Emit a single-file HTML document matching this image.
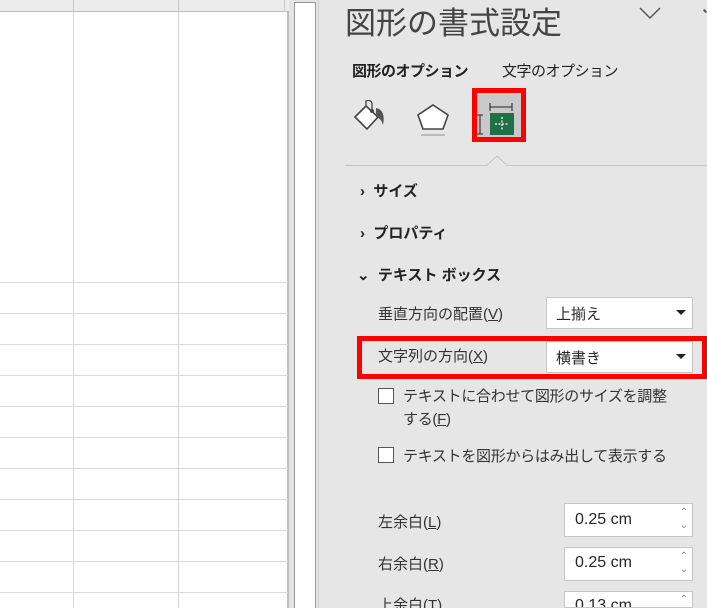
<!DOCTYPE html>
<html><head><meta charset="utf-8"><style>
*{margin:0;padding:0;box-sizing:border-box}
html{width:707px;height:608px;overflow:hidden}
body{width:707px;height:608px;overflow:hidden;background:#e6e6e6;position:relative;font-family:"Liberation Sans","Noto Sans CJK JP",sans-serif;color:#262626}
.a{position:absolute}
.grid{left:0;top:0;width:289px;height:608px;background:#fff}
.hl{position:absolute;left:0;width:288px;height:1px;background:#dadada}
.vl{position:absolute;top:12px;width:1px;height:596px;background:#d4d4d4}
.t{position:absolute;white-space:nowrap}
.dd{position:absolute;background:#fff;border:1px solid #c6c6c6;overflow:hidden}
.arr{position:absolute;right:6px;top:12px;width:0;height:0;border-left:5px solid transparent;border-right:5px solid transparent;border-top:5px solid #222}
.cb{position:absolute;width:16px;height:16px;background:#fff;border:1px solid #555}
u{text-decoration:underline}
</style></head><body>
<div class="a grid"></div>
<div class="a" style="left:0;top:0;width:289px;height:12px;background:#ececec;border-bottom:1px solid #bcbcbc"></div>
<div class="vl" style="left:73px"></div>
<div class="vl" style="left:178px"></div>
<div class="a" style="left:73px;top:0;width:1px;height:12px;background:#c8c8c8"></div>
<div class="a" style="left:178px;top:0;width:1px;height:12px;background:#c8c8c8"></div>
<div class="a" style="left:284px;top:0;width:1px;height:12px;background:#c8c8c8"></div>
<div class="a" style="left:287px;top:12px;width:2px;height:596px;background:#c0c0c0"></div>
<div class="hl" style="top:282px"></div><div class="hl" style="top:313px"></div><div class="hl" style="top:344px"></div><div class="hl" style="top:375px"></div><div class="hl" style="top:406px"></div><div class="hl" style="top:437px"></div><div class="hl" style="top:468px"></div><div class="hl" style="top:499px"></div><div class="hl" style="top:530px"></div><div class="hl" style="top:561px"></div><div class="hl" style="top:592px"></div>
<div class="a" style="left:289px;top:0;width:29px;height:608px;background:#e4e4e4"></div>
<div class="a" style="left:294px;top:2px;width:22px;height:606px;background:#fff;border:1px solid #999;border-bottom:none"></div>
<div class="a" style="left:318px;top:0;width:1px;height:608px;background:#d0d0d0"></div>
<div class="t" style="left:345px;top:-2px;font-size:31px;color:#444">図形の書式設定</div>
<svg class="a" style="left:639px;top:6px" width="24" height="14"><path d="M1 2 L11 12 L21 2" fill="none" stroke="#555" stroke-width="1.5"/></svg>
<div class="a" style="left:703px;top:10px;width:4px;height:2px;background:#555;transform:rotate(45deg)"></div>
<div class="t" style="left:352px;top:60px;font-size:15px;font-weight:bold;color:#222;letter-spacing:-0.5px">図形のオプション</div>
<div class="t" style="left:502px;top:60px;font-size:15px;color:#222;letter-spacing:-0.5px">文字のオプション</div>
<svg class="a" style="left:352px;top:100px" width="40" height="40"><path d="M3 17 L14 6 L26 17 L15 29 Z" fill="#fff" stroke="#444" stroke-width="1.6"/><path d="M14 6 L14 1 Q18 -1 20 3 L20 10" fill="none" stroke="#444" stroke-width="1.3"/><circle cx="20" cy="11" r="2" fill="#444"/><path d="M24 8 Q34 10 31 25 Q29 18 24 17 Z" fill="#555"/></svg>
<svg class="a" style="left:415px;top:102px" width="40" height="36"><path d="M18 3 L33 13 L28 27 L8 27 L3 13 Z" fill="#fff" stroke="#444" stroke-width="1.6"/><path d="M6 33 L30 33" stroke="#bbb" stroke-width="2"/></svg>
<div class="a" style="left:472px;top:88px;width:54px;height:54px;border:5px solid #ff0000;background:#c9c9c9"></div>
<svg class="a" style="left:477px;top:93px" width="44" height="44"><path d="M13 14 L35 14 M13 10 L13 18 M35 10 L35 18" stroke="#444" stroke-width="1.3" fill="none"/><path d="M3 22 L3 41 M0 22 L6 22 M0 41 L6 41" stroke="#444" stroke-width="1.3"/><rect x="13" y="20" width="24" height="22" fill="#1e7145"/><path d="M25 24 L25 38 M18 31 L32 31" stroke="#fff" stroke-width="1.3" stroke-dasharray="2 1.5"/></svg>
<div class="a" style="left:345px;top:165px;width:362px;height:1px;background:#c4c4c4"></div>
<svg class="a" style="left:486px;top:155px" width="22" height="12"><path d="M0 11 L11 1 L22 11" fill="#e6e6e6" stroke="#c4c4c4" stroke-width="1"/></svg>
<div class="t" style="left:360px;top:180px;font-size:15px;font-weight:bold;color:#222">›&nbsp; サイズ</div>
<div class="t" style="left:360px;top:222px;font-size:15px;font-weight:bold;color:#222">›&nbsp; プロパティ</div>
<div class="t" style="left:357px;top:264px;font-size:15px;font-weight:bold;color:#222">⌄&nbsp; テキスト ボックス</div>
<div class="t" style="left:378px;top:303px;font-size:15px;color:#333">垂直方向の配置(<u>V</u>)</div>
<div class="dd" style="left:546px;top:297px;width:147px;height:32px"><span class="t" style="left:9px;top:5px;font-size:15px">上揃え</span><div class="arr"></div></div>
<div class="a" style="left:357px;top:336px;width:350px;height:43px;border:5px solid #ff0000"></div>
<div class="t" style="left:378px;top:345px;font-size:15px;color:#333">文字列の方向(<u>X</u>)</div>
<div class="dd" style="left:546px;top:341px;width:147px;height:32px"><span class="t" style="left:9px;top:5px;font-size:15px">横書き</span><div class="arr"></div></div>
<div class="cb" style="left:378px;top:388px"></div>
<div class="t" style="left:403px;top:385px;font-size:15px;color:#333;line-height:23px;letter-spacing:-0.3px">テキストに合わせて図形のサイズを調整<br>する(<u>F</u>)</div>
<div class="cb" style="left:378px;top:447px"></div>
<div class="t" style="left:403px;top:445px;font-size:15px;color:#333;letter-spacing:-0.3px">テキストを図形からはみ出して表示する</div>
<div class="t" style="left:378px;top:511px;font-size:15px;color:#333">左余白(<u>L</u>)</div>
<div class="dd" style="left:564px;top:503px;width:129px;height:34px"><span class="t" style="left:10px;top:7px;font-size:16px">0.25 cm</span><span class="t" style="right:4px;top:2px;font-size:10px;color:#888;line-height:13px">⌃<br>⌄</span></div>
<div class="t" style="left:378px;top:553px;font-size:15px;color:#333">右余白(<u>R</u>)</div>
<div class="dd" style="left:564px;top:547px;width:129px;height:34px"><span class="t" style="left:10px;top:6px;font-size:16px">0.25 cm</span><span class="t" style="right:4px;top:2px;font-size:10px;color:#888;line-height:13px">⌃<br>⌄</span></div>
<div class="t" style="left:378px;top:594px;font-size:15px;color:#333">上余白(<u>T</u>)</div>
<div class="dd" style="left:564px;top:591px;width:129px;height:17px"><span class="t" style="left:10px;top:5px;font-size:16px">0.13 cm</span><span class="t" style="right:4px;top:2px;font-size:10px;color:#888">⌃</span></div>
</body></html>
